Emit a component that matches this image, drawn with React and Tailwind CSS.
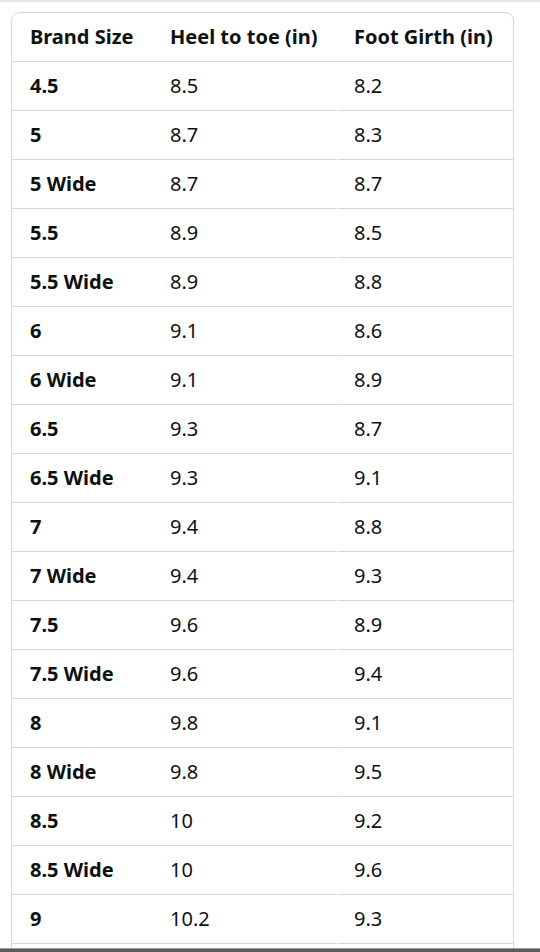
const ROWS = [
  ['4.5', '8.5', '8.2'],
  ['5', '8.7', '8.3'],
  ['5 Wide', '8.7', '8.7'],
  ['5.5', '8.9', '8.5'],
  ['5.5 Wide', '8.9', '8.8'],
  ['6', '9.1', '8.6'],
  ['6 Wide', '9.1', '8.9'],
  ['6.5', '9.3', '8.7'],
  ['6.5 Wide', '9.3', '9.1'],
  ['7', '9.4', '8.8'],
  ['7 Wide', '9.4', '9.3'],
  ['7.5', '9.6', '8.9'],
  ['7.5 Wide', '9.6', '9.4'],
  ['8', '9.8', '9.1'],
  ['8 Wide', '9.8', '9.5'],
  ['8.5', '10', '9.2'],
  ['8.5 Wide', '10', '9.6'],
  ['9', '10.2', '9.3'],
];

function Row({ cells, header }) {
  return (
    <div className="flex h-[49px] items-stretch">
      <div className="w-[140px] border-b border-[#d5d9d9] pl-[18px] flex items-center font-bold">
        {cells[0]}
      </div>
      <div className={`w-[184px] border-b border-[#d5d9d9] pl-[18px] flex items-center ${header ? 'font-bold' : ''}`}>
        {cells[1]}
      </div>
      <div className={`flex-1 ml-[1px] border-b border-[#d5d9d9] pl-[17px] flex items-center ${header ? 'font-bold' : ''}`}>
        {cells[2]}
      </div>
    </div>
  );
}

export default function App() {
  return (
    <div
      className="relative h-[952px] w-[540px] overflow-hidden bg-white text-[20px] text-[#0f1111]"
      style={{ fontFamily: '"Noto Sans", "Open Sans", Arial, sans-serif' }}
    >
      <div className="h-[2px] bg-[#e3e6e6]" />
      <div className="ml-[11px] mt-[10px] w-[503px] rounded-t-[9px] border border-b-0 border-[#d5d9d9]">
        <Row header cells={['Brand Size', 'Heel to toe (in)', 'Foot Girth (in)']} />
        {ROWS.map((r) => (
          <Row key={r[0]} cells={r} />
        ))}
        {/* start of the next row, cut by the sheet edge */}
        <div className="h-[12px]" />
      </div>
      {/* bottom sheet edge */}
      <div className="absolute bottom-0 left-0 right-0 h-[4px] border-t border-[#9a9a9a] bg-[#5c5c5c]" />
    </div>
  );
}
